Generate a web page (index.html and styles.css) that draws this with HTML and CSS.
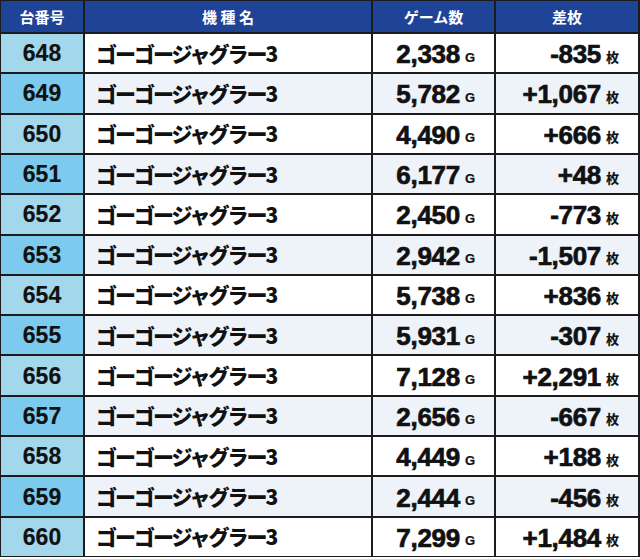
FILE: index.html
```html
<!DOCTYPE html>
<html lang="ja">
<head>
<meta charset="utf-8">
<title>データ</title>
<link rel="stylesheet" href="styles.css">
</head>
<body>
<div class="table">
  <div class="th">台番号</div>
  <div class="th spaced">機 種 名</div>
  <div class="th">ゲーム数</div>
  <div class="th">差枚</div>

  <div class="no">648</div><div class="name">ゴーゴージャグラー3</div><div class="num">2,338<span class="u">G</span></div><div class="num">-835<span class="u">枚</span></div>
  <div class="no alt">649</div><div class="name alt">ゴーゴージャグラー3</div><div class="num alt">5,782<span class="u">G</span></div><div class="num alt">+1,067<span class="u">枚</span></div>
  <div class="no">650</div><div class="name">ゴーゴージャグラー3</div><div class="num">4,490<span class="u">G</span></div><div class="num">+666<span class="u">枚</span></div>
  <div class="no alt">651</div><div class="name alt">ゴーゴージャグラー3</div><div class="num alt">6,177<span class="u">G</span></div><div class="num alt">+48<span class="u">枚</span></div>
  <div class="no">652</div><div class="name">ゴーゴージャグラー3</div><div class="num">2,450<span class="u">G</span></div><div class="num">-773<span class="u">枚</span></div>
  <div class="no alt">653</div><div class="name alt">ゴーゴージャグラー3</div><div class="num alt">2,942<span class="u">G</span></div><div class="num alt">-1,507<span class="u">枚</span></div>
  <div class="no">654</div><div class="name">ゴーゴージャグラー3</div><div class="num">5,738<span class="u">G</span></div><div class="num">+836<span class="u">枚</span></div>
  <div class="no alt">655</div><div class="name alt">ゴーゴージャグラー3</div><div class="num alt">5,931<span class="u">G</span></div><div class="num alt">-307<span class="u">枚</span></div>
  <div class="no">656</div><div class="name">ゴーゴージャグラー3</div><div class="num">7,128<span class="u">G</span></div><div class="num">+2,291<span class="u">枚</span></div>
  <div class="no alt">657</div><div class="name alt">ゴーゴージャグラー3</div><div class="num alt">2,656<span class="u">G</span></div><div class="num alt">-667<span class="u">枚</span></div>
  <div class="no">658</div><div class="name">ゴーゴージャグラー3</div><div class="num">4,449<span class="u">G</span></div><div class="num">+188<span class="u">枚</span></div>
  <div class="no alt">659</div><div class="name alt">ゴーゴージャグラー3</div><div class="num alt">2,444<span class="u">G</span></div><div class="num alt">-456<span class="u">枚</span></div>
  <div class="no">660</div><div class="name">ゴーゴージャグラー3</div><div class="num">7,299<span class="u">G</span></div><div class="num">+1,484<span class="u">枚</span></div>
</div>
</body>
</html>
```
FILE: styles.css
```css
html, body {
  margin: 0;
  padding: 0;
  background: #ffffff;
}
.table {
  width: 640px;
  height: 557px;
  box-sizing: border-box;
  padding: 1px 2px 1px 1px;
  background: #1c1c1c;
  display: grid;
  grid-template-columns: 82px 286px 121px 142px;
  grid-template-rows: 31px repeat(13, minmax(0, 1fr));
  gap: 2px;
  line-height: 1;
}
.table > div {
  min-height: 0;
  overflow: hidden;
}
.th {
  background: #1f4497;
  color: #ffffff;
  font-family: "Noto Sans CJK JP", sans-serif;
  font-weight: 700;
  font-size: 15px;
  display: flex;
  align-items: center;
  justify-content: center;
}
.no {
  background: #a3d7ec;
  color: #111;
  font-family: "Liberation Sans", Arial, sans-serif;
  font-weight: 700;
  font-size: 23px;
  -webkit-text-stroke: 0.2px #111;
  display: flex;
  align-items: center;
  justify-content: center;
  padding-top: 1px;
}
.no.alt {
  background: #7ccbee;
}
.name {
  background: #ffffff;
  color: #111;
  font-family: "Noto Sans CJK JP", sans-serif;
  font-weight: 900;
  font-size: 21px;
  letter-spacing: -2px;
  display: flex;
  align-items: center;
  padding-left: 11px;
}
.num {
  background: #ffffff;
  color: #111;
  font-family: "Liberation Sans", Arial, sans-serif;
  font-weight: 700;
  font-size: 26px;
  letter-spacing: -0.3px;
  -webkit-text-stroke: 0.7px #111;
  display: flex;
  align-items: center;
  justify-content: flex-end;
  padding: 2px 19px 0 0;
}
.name.alt, .num.alt {
  background: #eef2f9;
}
.u {
  font-size: 13px;
  margin: 6px 0 0 5px;
  letter-spacing: 0;
  -webkit-text-stroke: 0.2px #111;
  font-family: "Liberation Sans", "Noto Sans CJK JP", sans-serif;
}
```
